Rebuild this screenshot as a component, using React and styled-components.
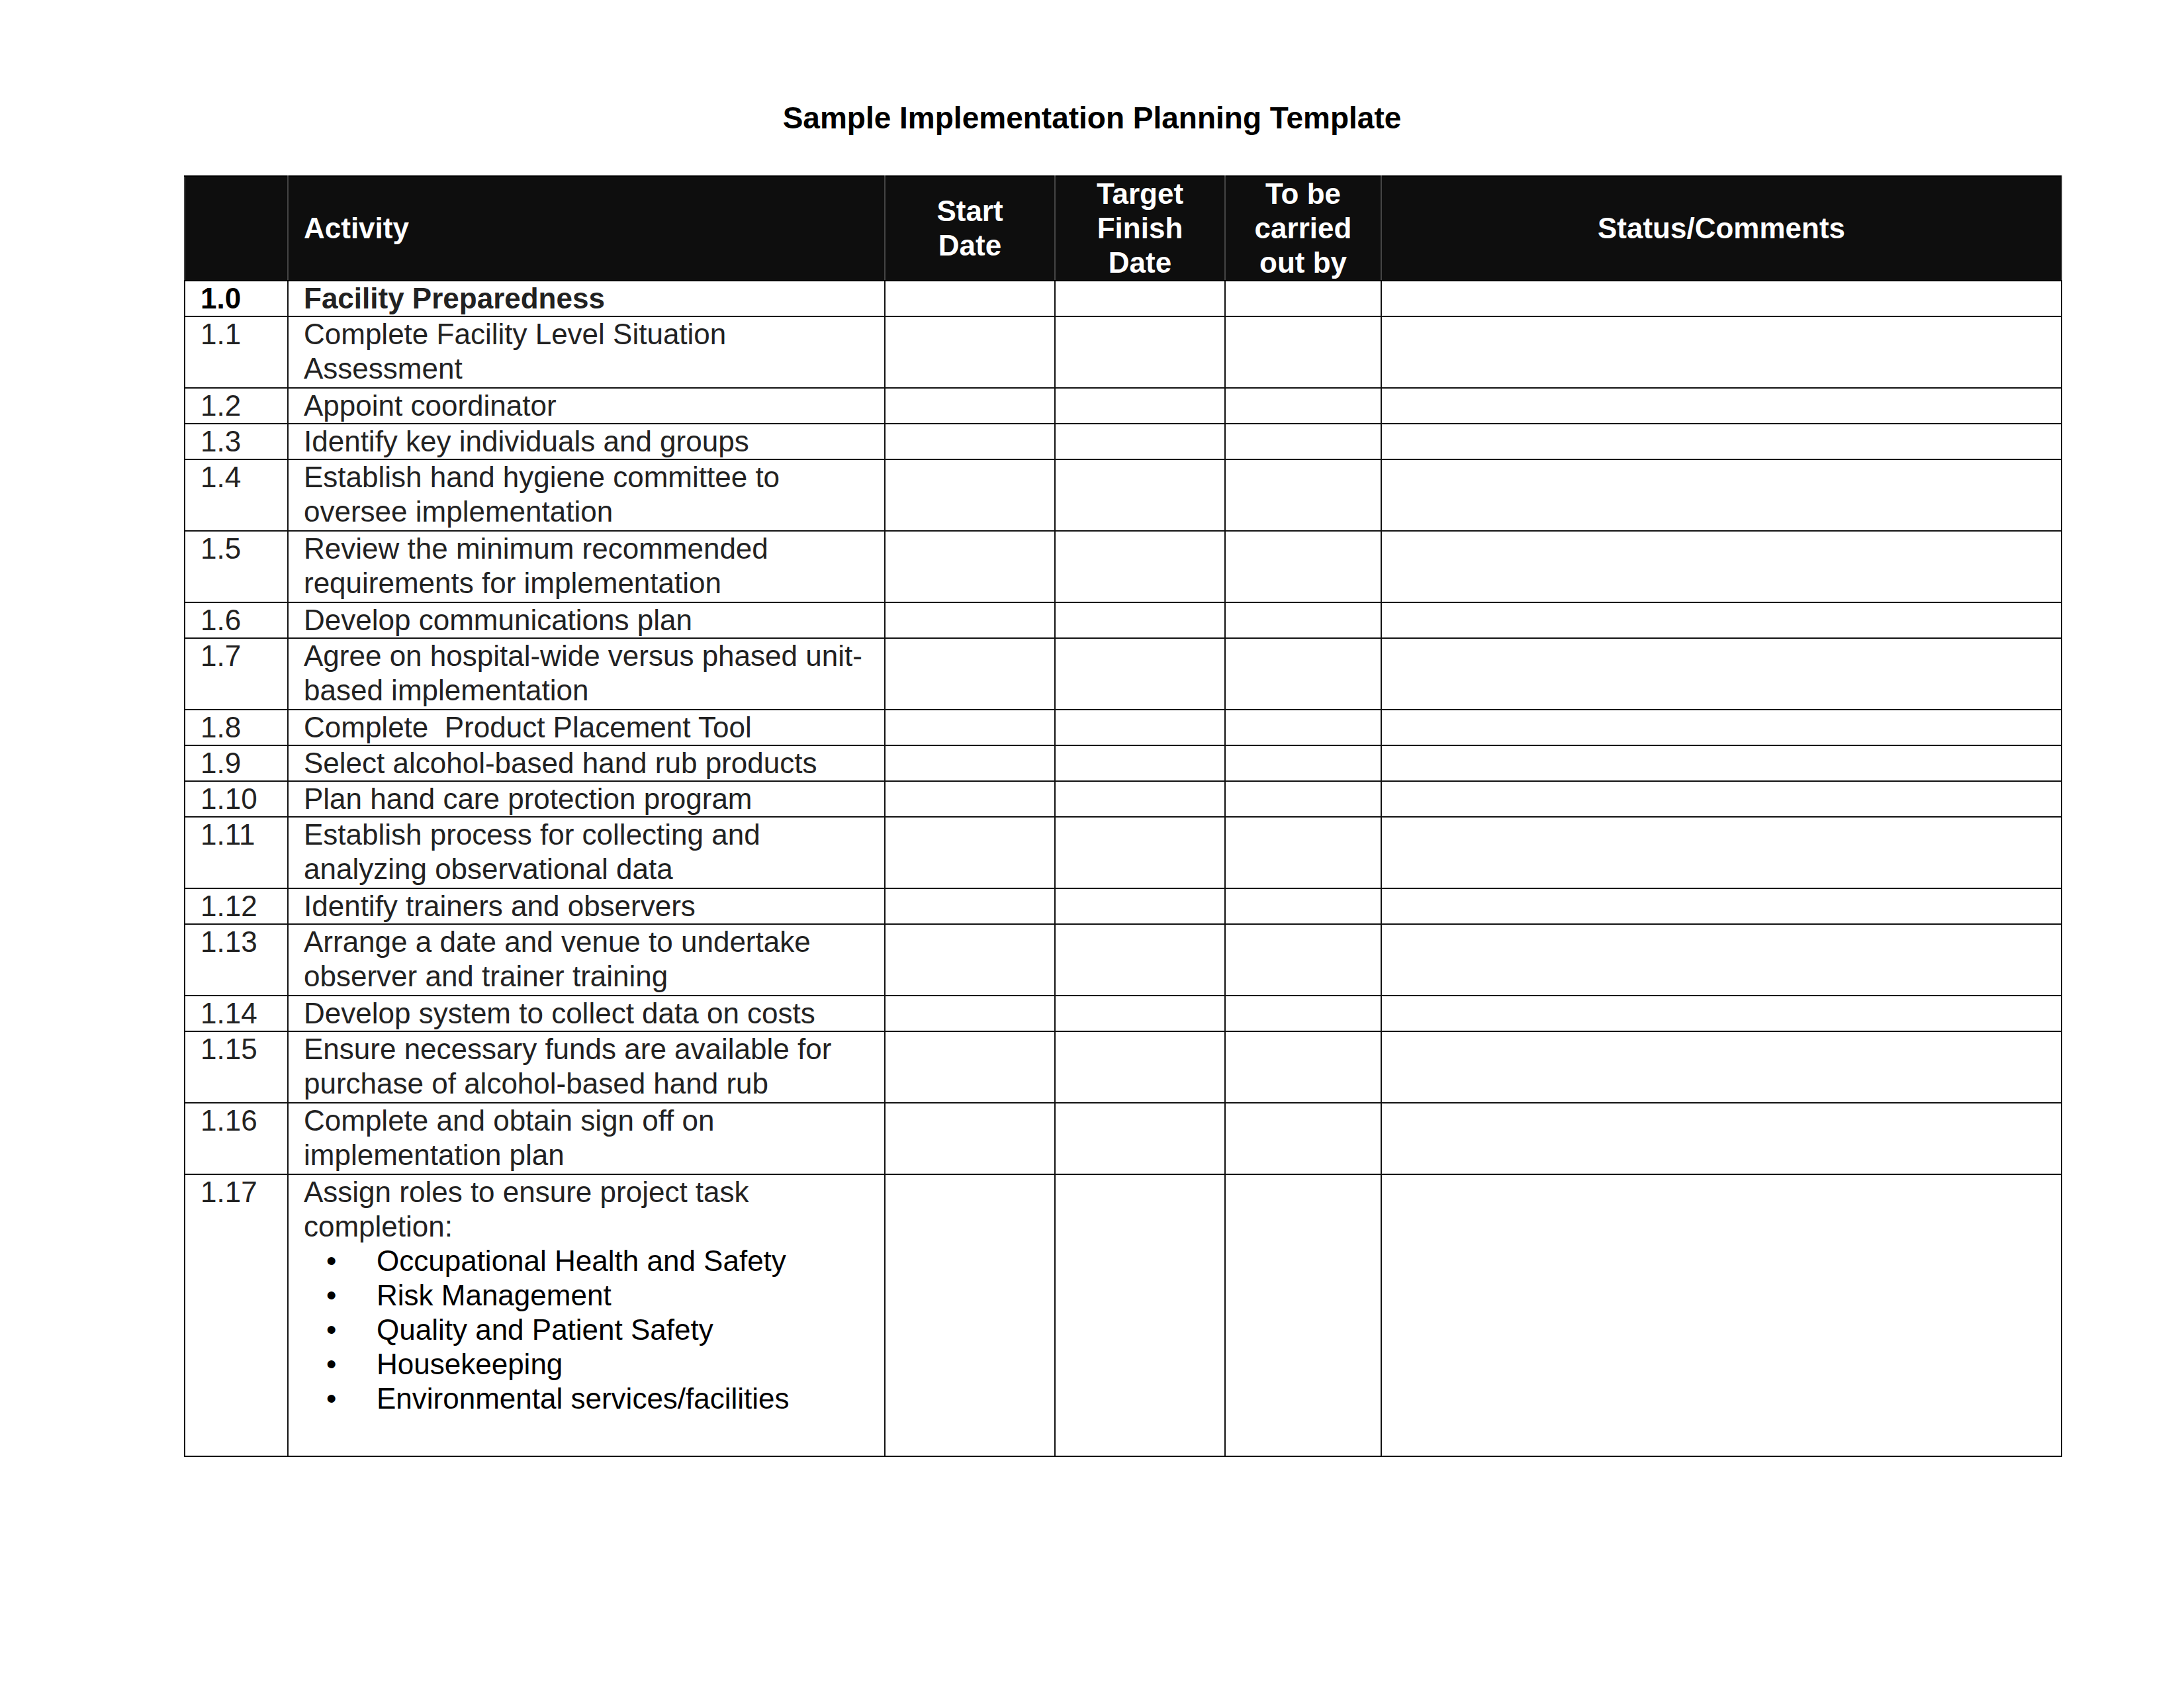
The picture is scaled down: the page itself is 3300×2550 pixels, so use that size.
import React from "react";
import styled, { createGlobalStyle } from "styled-components";

const Global = createGlobalStyle`
  body { margin: 0; background: #fff; font-family: "Liberation Sans", Arial, sans-serif; }
`;

const Page = styled.div`
  width: 3300px;
  height: 2550px;
  padding-top: 148px;
  box-sizing: border-box;
`;

const Title = styled.h1`
  margin: 0 0 57px 0;
  text-align: center;
  font-size: 46px;
  font-weight: bold;
  color: #000;
  line-height: 60px;
`;

const Table = styled.table`
  margin-left: 278px;
  width: 2836px;
  border-collapse: collapse;
  table-layout: fixed;
  font-size: 44px;
  color: #222;
`;

const Th = styled.th`
  background: #0e0e0e;
  color: #fff;
  font-weight: bold;
  height: 156px;
  border: 2px solid #000;
  border-left-color: #444;
  border-right-color: #444;
  text-align: ${(p) => p.$align || "center"};
  padding: 0 0 0 ${(p) => (p.$align === "left" ? "23px" : "0")};
  line-height: 52px;
  vertical-align: middle;
`;

const Td = styled.td`
  border: 2px solid #111;
  padding: 0 12px 0 23px;
  vertical-align: top;
  line-height: 52px;
  height: ${(p) => p.$h}px;
  font-weight: ${(p) => (p.$bold ? "bold" : "normal")};
  color: ${(p) => (p.$num && p.$bold ? "#000" : "#222")};
  box-sizing: border-box;
`;

const Bullets = styled.ul`
  margin: 0;
  padding: 0 0 0 110px;
  list-style: none;
  color: #000;
`;

const Bullet = styled.li`
  position: relative;
  &::before {
    content: "•";
    position: absolute;
    left: -76px;
  }
`;

const rows = [
  ["1.0", "Facility Preparedness", 1, true],
  ["1.1", "Complete Facility Level Situation Assessment", 2],
  ["1.2", "Appoint coordinator", 1],
  ["1.3", "Identify key individuals and groups", 1],
  ["1.4", "Establish hand hygiene committee to oversee implementation", 2],
  ["1.5", "Review the minimum recommended requirements for implementation", 2],
  ["1.6", "Develop communications plan", 1],
  ["1.7", "Agree on hospital-wide versus phased unit-based implementation", 2],
  ["1.8", "Complete\u00a0 Product Placement Tool", 1],
  ["1.9", "Select alcohol-based hand rub products", 1],
  ["1.10", "Plan hand care protection program", 1],
  ["1.11", "Establish process for collecting and analyzing observational data", 2],
  ["1.12", "Identify trainers and observers", 1],
  ["1.13", "Arrange a date and venue to undertake observer and trainer training", 2],
  ["1.14", "Develop system to collect data on costs", 1],
  ["1.15", "Ensure necessary funds are available for purchase of alcohol-based hand rub", 2],
  ["1.16", "Complete and obtain sign off on implementation plan", 2],
];

const bullets = [
  "Occupational Health and Safety",
  "Risk Management",
  "Quality and Patient Safety",
  "Housekeeping",
  "Environmental services/facilities",
];

function Empty({ h }) {
  return (
    <>
      <Td $h={h} />
      <Td $h={h} />
      <Td $h={h} />
      <Td $h={h} />
    </>
  );
}

export default function App() {
  return (
    <Page>
      <Global />
      <Title>Sample Implementation Planning Template</Title>
      <Table>
        <colgroup>
          <col style={{ width: 156 }} />
          <col style={{ width: 902 }} />
          <col style={{ width: 257 }} />
          <col style={{ width: 257 }} />
          <col style={{ width: 236 }} />
          <col style={{ width: 1028 }} />
        </colgroup>
        <thead>
          <tr>
            <Th />
            <Th $align="left">Activity</Th>
            <Th>Start<br />Date</Th>
            <Th>Target<br />Finish<br />Date</Th>
            <Th>To be<br />carried<br />out by</Th>
            <Th>Status/Comments</Th>
          </tr>
        </thead>
        <tbody>
          {rows.map(([n, t, lines, bold]) => {
            const h = lines === 1 ? 54 : 108;
            return (
              <tr key={n}>
                <Td $h={h} $bold={bold} $num>{n}</Td>
                <Td $h={h} $bold={bold}>{t}</Td>
                <Empty h={h} />
              </tr>
            );
          })}
          <tr>
            <Td $h={426}>1.17</Td>
            <Td $h={426}>
              Assign roles to ensure project task completion:
              <Bullets>
                {bullets.map((b) => (
                  <Bullet key={b}>{b}</Bullet>
                ))}
              </Bullets>
            </Td>
            <Empty h={426} />
          </tr>
        </tbody>
      </Table>
    </Page>
  );
}
